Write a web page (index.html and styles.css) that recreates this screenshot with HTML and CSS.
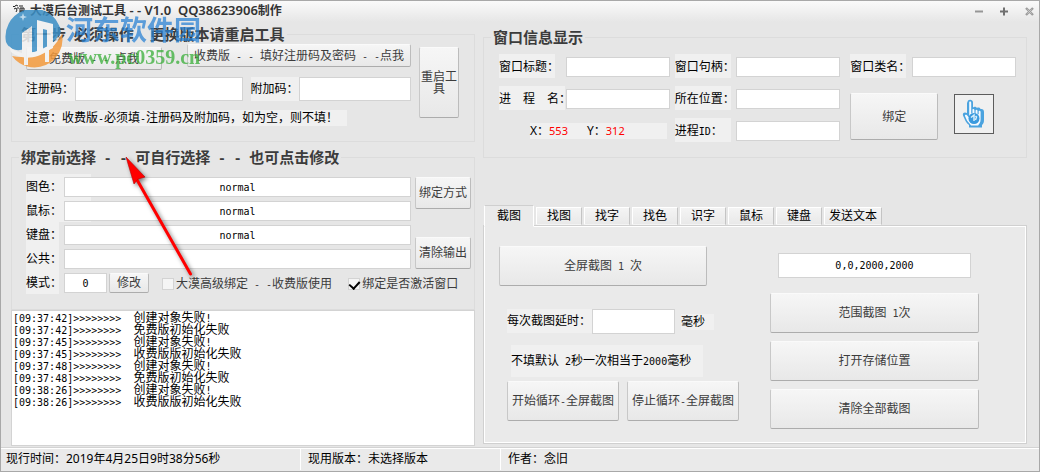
FILE: index.html
```html
<!DOCTYPE html>
<html lang="zh-CN">
<head>
<meta charset="utf-8">
<title>大漠后台测试工具</title>
<link rel="stylesheet" href="styles.css">
</head>
<body>
<div class="window">
  <header class="titlebar">
    <svg class="app-icon" width="14" height="12" viewBox="0 0 14 12" fill="none" stroke="#222" aria-hidden="true">
      <path d="M1 3.500h2l1-1.500 2 1M2 6l2-1 1 2-1 2M5 5h2M7 3h4M8 5h4v3H8zM10 5v3M7 9l5-.5"/>
    </svg>
    <h1 class="title">大漠后台测试工具<span class="title-en"> - - V1.0&nbsp; QQ38623906</span>制作</h1>
    <div class="controls">
      <button type="button" aria-label="最小化"><svg width="9" height="9" viewBox="0 0 9 9"><path d="M0 4.500h8" stroke="#969696" stroke-width="2"/></svg></button>
      <button type="button" aria-label="最大化"><svg width="9" height="9" viewBox="0 0 9 9"><path d="M0 4.500h8M4 .5v8" stroke="#707070" stroke-width="2"/></svg></button>
      <button type="button" aria-label="关闭"><svg width="9" height="9" viewBox="0 0 9 9"><path d="M1 1l7 7M8 1L1 8" stroke="#9c9c9c" stroke-width="2.400"/><path d="M2.500 2.500l4 4M6.500 2.500l-4 4" stroke="#d0d0d0" stroke-width=".8"/></svg></button>
    </div>
  </header>

  <main class="main">
    <div class="column">
      <fieldset class="group register">
        <legend>第一步<span class="en"> </span>必须操作<span class="en">  </span>更换版本请重启工具</legend>
        <div class="register-body">
          <div class="register-fields">
            <div class="version-row">
              <button type="button" class="btn free">免费版<span class="en"> - - </span>点我</button>
              <button type="button" class="btn paid">收费版<span class="en"> - - </span>填好注册码及密码<span class="en"> - -</span>点我</button>
            </div>
            <div class="code-row">
              <label class="tag code-label" for="reg">注册码：</label><input class="field reg" id="reg">
              <label class="tag code-label extra-label" for="extra">附加码：</label><input class="field extra" id="extra">
            </div>
            <p class="tag notice">注意：收费版<span class="en">-</span>必须填<span class="en">-</span>注册码及附加码，如为空，则不填！</p>
          </div>
          <button type="button" class="btn restart">重启工具</button>
        </div>
      </fieldset>

      <fieldset class="group binding">
        <legend>绑定前选择<span class="en"> - - </span>可自行选择<span class="en"> - - </span>也可点击修改</legend>
        <div class="bind-body">
          <div class="bind-fields">
            <div class="row"><label class="tag bind-label wide" for="pic">图色：</label><input class="field grow" id="pic" value="normal"></div>
            <div class="row"><label class="tag bind-label wide" for="mouse">鼠标：</label><input class="field grow" id="mouse" value="normal"></div>
            <div class="row"><label class="tag bind-label" for="keys">键盘：</label><input class="field grow" id="keys" value="normal"></div>
            <div class="row"><label class="tag bind-label" for="public">公共：</label><input class="field grow" id="public"></div>
          </div>
          <div class="bind-actions">
            <button type="button" class="btn">绑定方式</button>
            <button type="button" class="btn">清除输出</button>
          </div>
        </div>
        <div class="row mode-row">
          <label class="tag bind-label" for="mode">模式：</label><input class="field mode" id="mode" value="0">
          <button type="button" class="btn modify">修改</button>
          <label class="check"><input type="checkbox"><span>大漠高级绑定<span class="en"> - -</span>收费版使用</span></label>
          <label class="check"><input type="checkbox" checked><span>绑定是否激活窗口</span></label>
        </div>
      </fieldset>

      <div class="log" role="log">
        <p><span class="en">[09:37:42]&gt;&gt;&gt;&gt;&gt;&gt;&gt;&gt;  </span>创建对象失败<span class="en">!</span></p>
        <p><span class="en">[09:37:42]&gt;&gt;&gt;&gt;&gt;&gt;&gt;&gt;  </span>免费版初始化失败</p>
        <p><span class="en">[09:37:45]&gt;&gt;&gt;&gt;&gt;&gt;&gt;&gt;  </span>创建对象失败<span class="en">!</span></p>
        <p><span class="en">[09:37:45]&gt;&gt;&gt;&gt;&gt;&gt;&gt;&gt;  </span>收费版版初始化失败</p>
        <p><span class="en">[09:37:48]&gt;&gt;&gt;&gt;&gt;&gt;&gt;&gt;  </span>创建对象失败<span class="en">!</span></p>
        <p><span class="en">[09:37:48]&gt;&gt;&gt;&gt;&gt;&gt;&gt;&gt;  </span>免费版初始化失败</p>
        <p><span class="en">[09:38:26]&gt;&gt;&gt;&gt;&gt;&gt;&gt;&gt;  </span>创建对象失败<span class="en">!</span></p>
        <p><span class="en">[09:38:26]&gt;&gt;&gt;&gt;&gt;&gt;&gt;&gt;  </span>收费版版初始化失败</p>
      </div>
    </div>

    <div class="column right">
      <fieldset class="group info">
        <legend>窗口信息显示</legend>
        <div class="info-body">
          <div class="info-col">
            <div class="row spread"><label class="tag info-label" for="wtitle">窗口标题：</label><input class="field info-field" id="wtitle"></div>
            <div class="row spread"><label class="tag info-label process" for="pname">进　程　名：</label><input class="field info-field" id="pname"></div>
            <div class="coords">
              <span class="tag coord">X：<output class="value">553</output></span>
              <span class="tag coord coord-y">Y：<output class="value">312</output></span>
            </div>
          </div>
          <div class="info-col">
            <div class="row spread"><label class="tag info-label" for="hwnd">窗口句柄：</label><input class="field info-field" id="hwnd"></div>
            <div class="row spread"><label class="tag info-label" for="path">所在位置：</label><input class="field info-field" id="path"></div>
            <div class="row spread"><label class="tag info-label" for="pid">进程<span class="en">ID</span>：</label><input class="field info-field" id="pid"></div>
          </div>
          <div class="info-col last">
            <div class="row spread"><label class="tag info-label" for="wclass">窗口类名：</label><input class="field info-field" id="wclass"></div>
            <div class="info-actions">
              <button type="button" class="btn bind">绑定</button>
              <button type="button" class="picker" aria-label="选取窗口">
                <svg width="26" height="32" viewBox="0 0 26 32" aria-hidden="true">
                  <path d="M7 2.500c2-1.500 5-.5 5 2v5c1-1 3-1 4 .5 1-.8 3-.3 3.500 1 2-.5 3.500.5 3.500 3v8c0 3-1 4-2 5v2.500H8V27c-1-1-2.500-2-3.500-4L2 17.500c-.8-2.500 1.500-4 4-2.500V5z" fill="#4ba3df"/>
                  <path d="M8.200 4c1-.8 2-.3 2 1v10.500h1.300V11.500c.5-.8 1.700-.6 1.900.4v4h1.200v-3.500c.4-.8 1.600-.7 1.900.3v3.500h1.200v-3c.5-.7 1.700-.5 1.900.5v7.800c0 3-1.300 4.500-2.500 6H10c-.8-2-3-3-4-5l-2-4.500c-.3-1.200 1-1.800 2-.8l2.200 2.500z" fill="#f5faff"/>
                  <circle cx="13" cy="20.500" r="5.500" fill="#3b9ade"/><path d="M10 19.500l3-2.500v6M14.500 18l1 1-1 3" stroke="#d8eefb" stroke-width="1.500" fill="none"/>
                </svg>
              </button>
            </div>
          </div>
        </div>
      </fieldset>

      <section class="tabs-area">
        <div class="tabs" role="tablist">
          <button type="button" class="tab active" role="tab" aria-selected="true">截图</button>
          <button type="button" class="tab" role="tab">找图</button>
          <button type="button" class="tab" role="tab">找字</button>
          <button type="button" class="tab" role="tab">找色</button>
          <button type="button" class="tab" role="tab">识字</button>
          <button type="button" class="tab" role="tab">鼠标</button>
          <button type="button" class="tab" role="tab">键盘</button>
          <button type="button" class="tab long" role="tab">发送文本</button>
        </div>
        <div class="panel" role="tabpanel">
          <div class="shot">
            <button type="button" class="btn tall full">全屏截图<span class="en"> 1 </span>次</button>
            <div class="shot-detail">
              <div class="delay-row">
                <label class="tag delay-label" for="delay">每次截图延时：</label><input class="field delay" id="delay">
                <span class="tag unit">毫秒</span>
              </div>
              <p class="tag hint">不填默认<span class="en"> 2</span>秒一次相当于<span class="en">2000</span>毫秒</p>
              <div class="loop-row">
                <button type="button" class="btn tall">开始循环<span class="en">-</span>全屏截图</button>
                <button type="button" class="btn tall">停止循环<span class="en">-</span>全屏截图</button>
              </div>
            </div>
          </div>
          <div class="range">
            <input class="field area" aria-label="截图范围" value="0,0,2000,2000">
            <button type="button" class="btn tall">范围截图<span class="en"> 1</span>次</button>
            <button type="button" class="btn tall">打开存储位置</button>
            <button type="button" class="btn tall">清除全部截图</button>
          </div>
        </div>
      </section>
    </div>
  </main>

  <footer class="status">
    <span class="cell">现行时间：2019年4月25日9时38分56秒</span>
    <span class="cell short">现用版本：未选择版本</span>
    <span class="cell rest">作者：念旧</span>
  </footer>

  <div class="watermark">
    <svg width="58" height="58" viewBox="0 0 58 58" aria-hidden="true">
      <path d="M1 32A28 28 0 0 1 51 10C43 15 36 20 31 30L20 39C11 42 4 39 1 32z" fill="#3b8fc6"/>
      <path d="M51 10a28 28 0 0 1 5 12c-5 10-16 17-27 20l-12 1 3-22 7 3V14l16-7z" fill="#3b8fc6"/>
      <path d="M57 24a28 28 0 0 1-50 22c20 4 41-5 50-22z" fill="#f39a3d"/>
      <path d="M17 23l10-7v27H17zM32 10l16 4v24l-6 3V20l-4-1v23l-6 2z" fill="#f4f4f4"/>
      <path d="M4 36c13 14 38 7 52-12-7 20-34 31-50 18z" fill="#f4f4f4"/>
      <path d="M21 43v12M42 40v12" stroke="#f4f4f4" stroke-width="4"/>
      <path d="M18 3l1 3 3 1-3 1-1 3-1-3-3-1 3-1z" fill="#b8d8ec"/>
    </svg>
    <div class="watermark-text"><span class="brand">河东软件园</span><span class="site">www.pc0359.cn</span></div>
  </div>

  <svg class="arrow" width="90" height="136" viewBox="0 0 90 136" aria-hidden="true">
    <path d="M80.500 124L26 28" stroke="#f00" stroke-width="3" stroke-linecap="round"/>
    <path d="M16 7L35 27l-7 2-4 5z" fill="#f00" stroke="#b00" stroke-width=".6"/>
  </svg>
</div>
</body>
</html>
```

FILE: styles.css
```css
* { box-sizing: border-box; }

body {
  margin: 0;
  font: 12px/16px "Noto Sans", "Noto Sans CJK SC", sans-serif;
  color: #000;
}

p, h1, fieldset { margin: 0; padding: 0; }

button, input {
  font: inherit;
  color: inherit;
  margin: 0;
  padding: 0;
}

.en {
  font-family: "DejaVu Sans Mono", monospace;
  font-size: 10px;
  line-height: 0;
  white-space: pre;
}

.window {
  position: relative;
  display: flex;
  flex-direction: column;
  min-height: 100vh;
  border: 1px solid #a8a8a8;
  background: linear-gradient(#fafafa, #e6e6e6 21px);
}

/* Title bar */
.titlebar {
  display: flex;
  align-items: center;
  height: 20px;
  padding: 0 5px 0 11px;
}

.app-icon { flex: none; align-self: flex-start; margin-top: 2px; }

.title {
  margin-left: 4px;
  font-size: 12px;
  line-height: 20px;
  font-weight: 600;
  color: #333;
  white-space: nowrap;
}

.title-en { font-size: 13px; line-height: 0; }

.controls { display: flex; gap: 16px; margin-left: auto; }

.controls button {
  display: flex;
  width: 9px;
  border: 0;
  background: none;
}

/* Shared pieces */
.main {
  flex: 1;
  display: grid;
  grid-template-columns: 464fr 544fr;
  gap: 8px;
  padding: 3px 12px 1px 10px;
}

.column { display: flex; flex-direction: column; min-width: 0; gap: 5px; }

.group {
  min-width: 0;
  border: 1px solid #dcdcdc;
}

.group legend {
  margin-left: 7px;
  padding: 0 2px;
  font-size: 15px;
  line-height: 20px;
  font-weight: 600;
  color: #3c3c3c;
  white-space: nowrap;
}

.group legend .en { font-size: 13px; }

.tag { background: #f0f0f0; white-space: nowrap; }

.field {
  min-width: 0;
  height: 20px;
  border: 1px solid #d3d3d3;
  border-radius: 0;
  background: #fff;
  font-family: "DejaVu Sans Mono", monospace;
  font-size: 10px;
  text-align: center;
}

.btn {
  border: 1px solid;
  border-color: #fafafa #bcbcbc #acacac #c8c8c8;
  border-radius: 2px;
  background: linear-gradient(#f6f6f6, #e8e8e8);
  color: #3c3c3c;
  line-height: 16px;
  white-space: nowrap;
}

.row { display: flex; height: 24px; }
.row .tag { padding-top: 1px; line-height: 23px; }
.row .field { align-self: flex-end; margin-bottom: 1px; }
.row .grow { flex: 1; }
.spread { justify-content: space-between; }

/* Registration */
.register-body { display: flex; gap: 8px; padding: 0 15px 15px 14px; }
.register-fields { flex: 1; min-width: 0; }
.version-row { display: flex; gap: 25px; height: 26px; }
.version-row .btn { height: 23px; }
.version-row .free { width: 136px; align-self: flex-end; }
.version-row .paid { flex: 1; }
.code-row { display: flex; margin-top: 7px; }
.code-row .field { height: 24px; }
.code-label { width: 49px; line-height: 24px; }
.extra-label { margin-left: 8px; width: 48px; }
.reg { flex: 3; }
.extra { flex: 2; }
.notice { width: 321px; margin-top: 9px; }

.restart {
  width: 40px;
  height: 71px;
  margin-top: 3px;
  line-height: 12px;
  white-space: normal;
}

/* Binding */
.binding { padding-bottom: 15px; }
.bind-body { display: flex; gap: 4px; padding: 7px 3px 0 14px; }
.bind-fields { flex: 1; min-width: 0; }
.bind-label { flex: none; width: 33px; margin-right: 5px; }
.bind-label.wide { width: 65px; margin-right: -27px; }
.bind-actions { display: flex; flex-direction: column; gap: 28px; padding-top: 3px; }
.bind-actions .btn { width: 56px; height: 32px; }
.mode-row { padding-left: 14px; }
.mode-row .mode { width: 43px; }
.mode-row .modify { width: 40px; height: 20px; margin: 3px 0 0 2px; }

.check {
  display: flex;
  align-items: center;
  gap: 2px;
  margin: 3px 0 0 13px;
  color: #3c3c3c;
  white-space: nowrap;
}

.check + .check { margin-left: 16px; }

.check input {
  appearance: none;
  display: grid;
  place-items: center;
  width: 12px;
  height: 12px;
  border: 1px solid #d3d3d3;
  background: #f4f4f4;
}

.check input:checked::after {
  content: "";
  width: 5px;
  height: 8px;
  border: solid #000;
  border-width: 0 2px 2px 0;
  transform: rotate(42deg);
}

/* Output */
.log {
  flex: 1;
  margin-top: -5px;
  padding: 1px;
  border: 1px solid #d3d3d3;
  background: #fff;
}

.log p { line-height: 12px; white-space: nowrap; }

/* Window information */
.right { padding-top: 3px; }

.info-body {
  display: grid;
  grid-template-columns: 170fr 165fr 170fr;
  gap: 5px;
  padding: 7px 10px 15px 15px;
}

.info-col { display: flex; flex-direction: column; gap: 8px; min-width: 0; }
.info-col.last { padding-left: 5px; }
.info-label { flex: none; width: 56px; }
.info-label.process { width: 66px; }
.info-field { width: 104px; }
.coords { display: flex; padding: 5px 3px 0 31px; }
.coord { width: 57px; }
.coord-y { flex: 1; }
.value { font-size: 11px; line-height: 0; color: #f00; }
.info-actions { display: flex; gap: 16px; align-items: flex-start; margin-top: 7px; }
.bind { width: 88px; height: 47px; }

.picker {
  display: grid;
  place-items: center;
  width: 40px;
  height: 40px;
  margin-top: 1px;
  border: 1px solid #5c5c5c;
  background: #f0f0f0;
}

/* Tabs */
.tabs-area { flex: 1; display: flex; flex-direction: column; margin: 42px 0 2px; }
.tabs { display: flex; align-items: flex-end; gap: 2px; height: 20px; padding-left: 1px; }

.tab {
  width: 46px;
  height: 18px;
  border: 1px solid;
  border-color: #fff #c4c4c4 transparent #fff;
  background: linear-gradient(#f4f4f4, #e9e9e9);
  line-height: 16px;
  white-space: nowrap;
}

.tab.active {
  position: relative;
  width: 50px;
  height: 22px;
  margin-bottom: -2px;
  border-color: #cfcfcf #fff #eaeaea #fff;
  background: #eaeaea;
}

.tab.long { width: 58px; }

.panel {
  flex: 1;
  display: grid;
  grid-template-columns: 240fr 209fr;
  gap: 31px;
  padding: 20px 47px 14px 15px;
  border: 1px solid #d0d0d0;
  box-shadow: inset 0 0 0 1px #fff;
  background: #eaeaea;
}

.tall { height: 40px; }
.shot .full { width: 208px; }
.shot-detail { padding: 23px 0 0 8px; }
.delay-row { display: flex; align-items: flex-start; }
.delay-label { width: 85px; line-height: 24px; }
.delay { width: 83px; height: 25px; }
.unit { width: 33px; margin: 5px 0 0 6px; }
.hint { width: 192px; margin: 11px 0 4px 4px; line-height: 32px; }
.loop-row { display: grid; grid-template-columns: 1fr 1fr; gap: 8px; }
.range { display: flex; flex-direction: column; gap: 8px; padding-top: 7px; }
.area { height: 25px; margin: 0 8px 7px; }

/* Status bar */
.status {
  display: flex;
  height: 24px;
  border-top: 1px solid #d3d3d3;
  box-shadow: inset 0 1px #fff;
  background: #eaeaea;
  line-height: 20px;
}

.cell {
  width: 300px;
  margin: 1px 0;
  padding-left: 5px;
  border-right: 1px solid #fff;
  white-space: nowrap;
}

.cell.short { width: 200px; padding-left: 7px; }
.cell.rest { flex: 1; padding-left: 7px; border: 0; }

/* Overlays */
.watermark {
  position: absolute;
  left: 4px;
  top: 9px;
  display: flex;
  gap: 3px;
  opacity: 0.85;
  pointer-events: none;
}

.watermark-text { display: flex; flex-direction: column; padding-top: 5px; }
.brand { font-size: 27px; line-height: 30px; font-weight: 700; color: rgba(38, 128, 212, 0.85); }
.site { padding-left: 2px; font: bold 20px/24px "Liberation Serif", serif; color: rgba(60, 175, 60, 0.9); }

.arrow {
  position: absolute;
  left: 109px;
  top: 149px;
  fill: none;
  filter: drop-shadow(2px 2px 2px rgba(0, 0, 0, 0.5));
  pointer-events: none;
}
```
